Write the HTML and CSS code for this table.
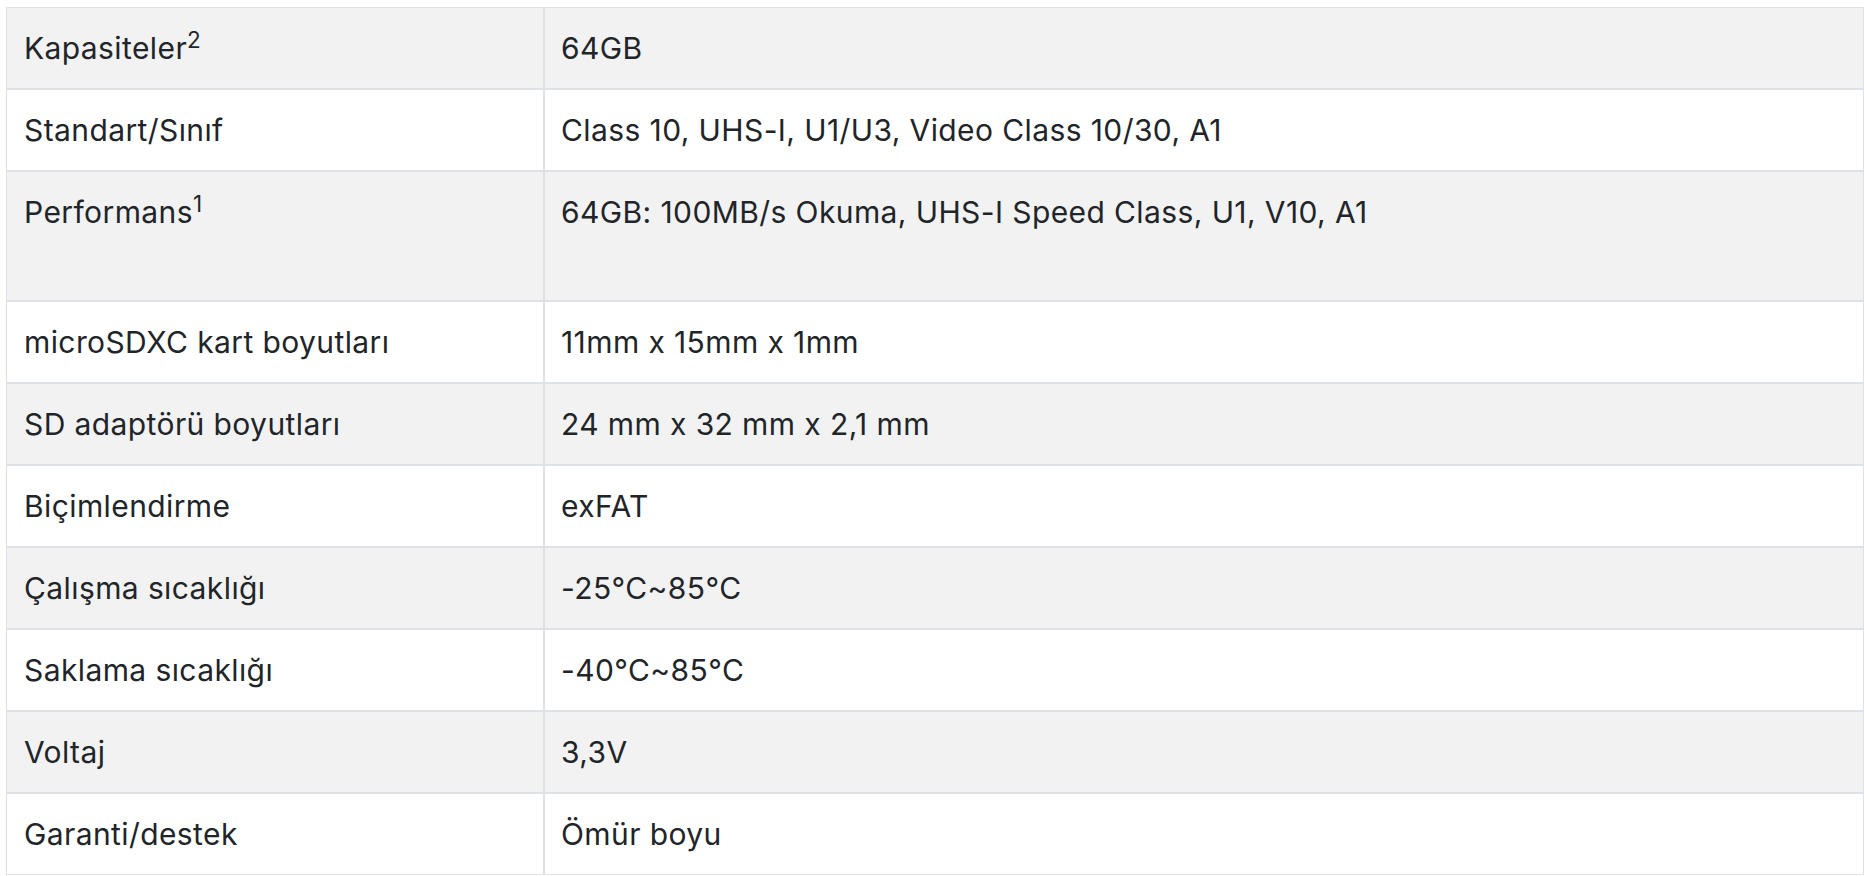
FILE: index.html
```html
<!DOCTYPE html>
<html lang="tr">
<head>
<meta charset="utf-8">
<title>Özellikler</title>
<link rel="stylesheet" href="styles.css">
</head>
<body>
<div class="page">
  <table class="specs">
    <colgroup>
      <col class="col-label">
      <col class="col-value">
    </colgroup>
    <tbody>
      <tr><td>Kapasiteler<sup>2</sup></td><td>64GB</td></tr>
      <tr><td>Standart/Sınıf</td><td>Class 10, UHS-I, U1/U3, Video Class 10/30, A1</td></tr>
      <tr><td>Performans<sup>1</sup></td><td><p class="cell-para">64GB: 100MB/s Okuma, UHS-I Speed Class, U1, V10, A1</p></td></tr>
      <tr><td>microSDXC kart boyutları</td><td>11mm x 15mm x 1mm</td></tr>
      <tr><td>SD adaptörü boyutları</td><td>24 mm x 32 mm x 2,1 mm</td></tr>
      <tr><td>Biçimlendirme</td><td>exFAT</td></tr>
      <tr><td>Çalışma sıcaklığı</td><td>-25°C~85°C</td></tr>
      <tr><td>Saklama sıcaklığı</td><td>-40°C~85°C</td></tr>
      <tr><td>Voltaj</td><td>3,3V</td></tr>
      <tr><td>Garanti/destek</td><td>Ömür boyu</td></tr>
    </tbody>
  </table>
</div>
</body>
</html>
```

FILE: styles.css
```css
html, body {
  margin: 0;
  padding: 0;
  background: #ffffff;
}

.page {
  padding: 7px 0 0 6px;
}

.specs {
  width: 1858px;
  table-layout: fixed;
  border-collapse: separate;
  border-spacing: 0;
  font-family: Inter, "Liberation Sans", sans-serif;
  font-size: 30px;
  line-height: 44px;
  letter-spacing: 0.4px;
  color: #212529;
}

.col-label {
  width: 538px;
}

.specs td {
  border: 1px solid #dee2e6;
  padding: 18px 17px;
  vertical-align: top;
  text-align: left;
}

.specs td + td {
  padding-left: 16px;
}

.specs tr:nth-child(odd) td {
  background: #f2f2f2;
}

.cell-para {
  margin: 0 0 48px;
}

.specs sup {
  font-size: 75%;
  line-height: 0;
  position: relative;
  top: -0.5em;
  vertical-align: baseline;
  letter-spacing: 0;
}
```
